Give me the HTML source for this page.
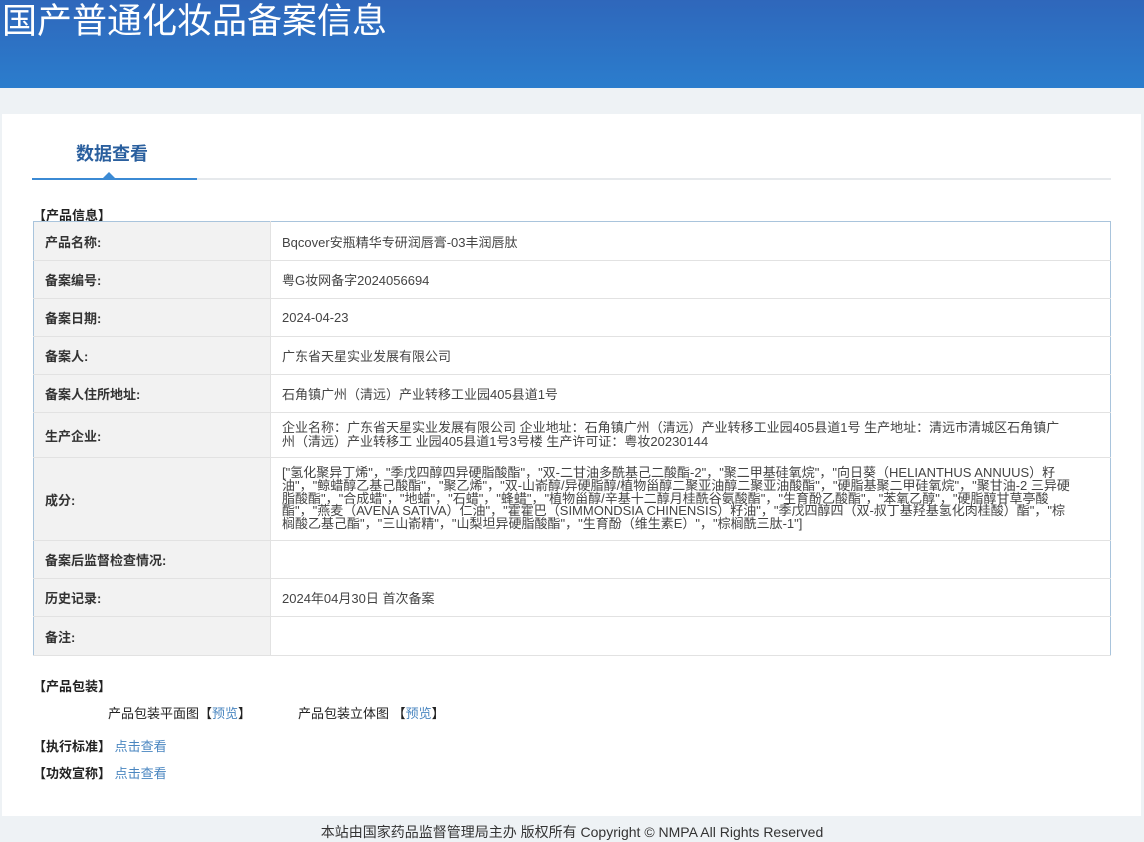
<!DOCTYPE html>
<html><head><meta charset="utf-8"><style>
*{margin:0;padding:0;box-sizing:border-box}
body{width:1144px;height:840px;overflow:hidden;background:#eef2f5;font-family:"Liberation Sans","Noto Sans CJK SC",sans-serif;font-size:13px;color:#333;position:relative}
.hd{position:absolute;left:0;top:0;width:1144px;height:88px;background:linear-gradient(180deg,#2f67bb 0%,#2b7dcd 100%)}
.hd h1{position:absolute;left:2px;top:-7px;font-size:35px;font-weight:normal;color:#fff;white-space:nowrap}
.card{position:absolute;left:2px;top:114px;width:1139px;height:702px;background:#fff}
.tab{position:absolute;left:76px;top:140px;font-size:18px;font-weight:bold;color:#2a5f9e}
.ln{position:absolute;left:32px;top:178px;width:1079px;height:2px;background:#e6e9ec}
.lnb{position:absolute;left:32px;top:178px;width:165px;height:2px;background:#3b8ad4}
.tri{position:absolute;left:103px;top:172px;width:0;height:0;border-left:6px solid transparent;border-right:6px solid transparent;border-bottom:6px solid #3b8ad4}
.sec{position:absolute;font-weight:bold;color:#222;font-size:13px}
table{position:absolute;left:33px;top:221px;width:1078px;border-collapse:collapse;border:1px solid #a9c4dc}
td{border-bottom:1px solid #e2e2e2;vertical-align:middle;font-size:13px}
td.l{width:237px;background:#f2f2f2;font-weight:bold;padding-left:11px;color:#333;border-right:1px solid #e2e2e2}
td.v{padding:0 40px 0 11px;color:#444}
.ing{line-height:12.8px;font-size:13px}
.addr{line-height:14px}
a{color:#4a86c0;text-decoration:none}
.t{position:absolute;font-size:13px;color:#222;white-space:nowrap}
.ft{position:absolute;top:822px;left:0;width:1144px;text-align:center;font-size:14px;color:#333}
</style></head><body>
<div class="hd"><h1>国产普通化妆品备案信息</h1></div>
<div class="card"></div>
<div class="tab">数据查看</div>
<div class="ln"></div><div class="lnb"></div><div class="tri"></div>
<div class="sec" style="left:33px;top:205px">【产品信息】</div>
<table>
<tr style="height:39px"><td class="l">产品名称:</td><td class="v">Bqcover安瓶精华专研润唇膏-03丰润唇肽</td></tr>
<tr style="height:38px"><td class="l">备案编号:</td><td class="v">粤G妆网备字2024056694</td></tr>
<tr style="height:38px"><td class="l">备案日期:</td><td class="v">2024-04-23</td></tr>
<tr style="height:38px"><td class="l">备案人:</td><td class="v">广东省天星实业发展有限公司</td></tr>
<tr style="height:38px"><td class="l">备案人住所地址:</td><td class="v">石角镇广州（清远）产业转移工业园405县道1号</td></tr>
<tr style="height:45px"><td class="l">生产企业:</td><td class="v addr">企业名称：广东省天星实业发展有限公司 企业地址：石角镇广州（清远）产业转移工业园405县道1号 生产地址：清远市清城区石角镇广 州（清远）产业转移工 业园405县道1号3号楼 生产许可证：粤妆20230144</td></tr>
<tr style="height:83px"><td class="l">成分:</td><td class="v ing">["氢化聚异丁烯"，"季戊四醇四异硬脂酸酯"，"双-二甘油多酰基己二酸酯-2"，"聚二甲基硅氧烷"，"向日葵（HELIANTHUS ANNUUS）籽油"，"鲸蜡醇乙基己酸酯"，"聚乙烯"，"双-山嵛醇/异硬脂醇/植物甾醇二聚亚油醇二聚亚油酸酯"，"硬脂基聚二甲硅氧烷"，"聚甘油-2 三异硬脂酸酯"，"合成蜡"，"地蜡"，"石蜡"，"蜂蜡"，"植物甾醇/辛基十二醇月桂酰谷氨酸酯"，"生育酚乙酸酯"，"苯氧乙醇"，"硬脂醇甘草亭酸酯"，"燕麦（AVENA SATIVA）仁油"，"霍霍巴（SIMMONDSIA CHINENSIS）籽油"，"季戊四醇四（双-叔丁基羟基氢化肉桂酸）酯"，"棕榈酸乙基己酯"，"三山嵛精"，"山梨坦异硬脂酸酯"，"生育酚（维生素E）"，"棕榈酰三肽-1"]</td></tr>
<tr style="height:38px"><td class="l">备案后监督检查情况:</td><td class="v"></td></tr>
<tr style="height:38px"><td class="l">历史记录:</td><td class="v">2024年04月30日 首次备案</td></tr>
<tr style="height:39px"><td class="l">备注:</td><td class="v"></td></tr>
</table>
<div class="sec" style="left:33px;top:676px">【产品包装】</div>
<div class="t" style="left:108px;top:703px">产品包装平面图【<a>预览</a>】</div>
<div class="t" style="left:298px;top:703px">产品包装立体图 【<a>预览</a>】</div>
<div class="t" style="left:33px;top:736px"><b>【执行标准】</b> <a>点击查看</a></div>
<div class="t" style="left:33px;top:763px"><b>【功效宣称】</b> <a>点击查看</a></div>
<div class="ft">本站由国家药品监督管理局主办 版权所有 Copyright © NMPA All Rights Reserved</div>
</body></html>
